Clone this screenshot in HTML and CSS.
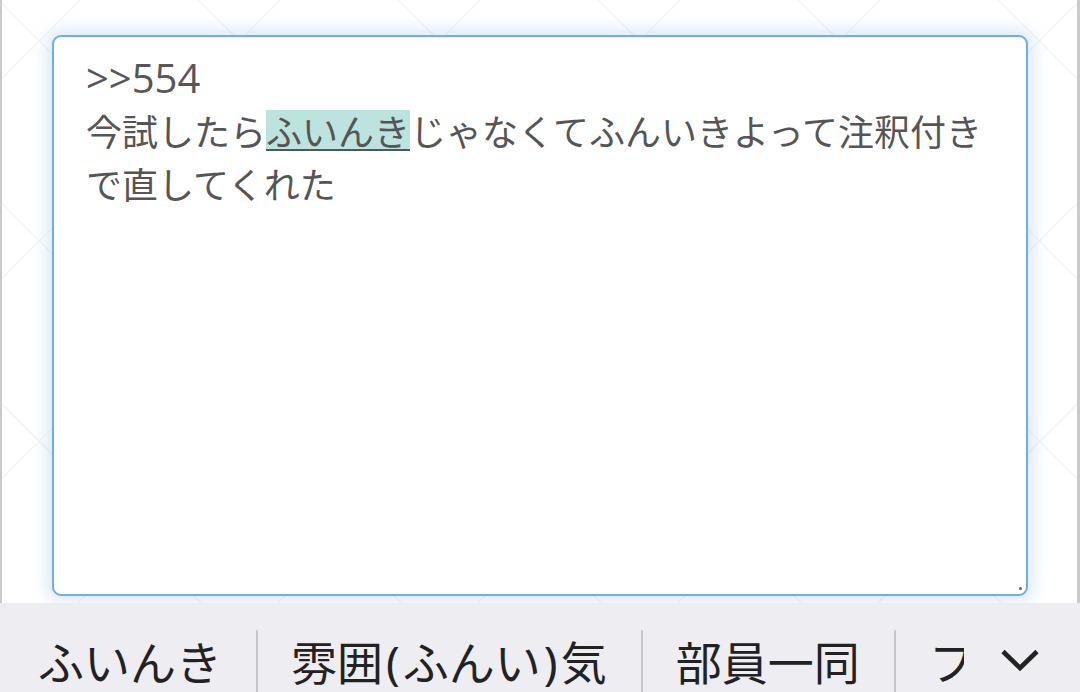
FILE: index.html
```html
<!DOCTYPE html>
<html lang="ja">
<head>
<meta charset="utf-8">
<link rel="stylesheet" href="styles.css">
</head>
<body>
<div class="page">
  <div class="content">
    <div class="editor">
      <div class="line"><span class="latin">&gt;&gt;554</span></div>
      <div class="line">今試したら<span class="compose">ふいんき</span>じゃなくてふんいきよって注釈付き</div>
      <div class="line">で直してくれた</div>
      <span class="grip"></span>
    </div>
  </div>
  <div class="bar">
    <div class="cand">ふいんき</div>
    <span class="sep"></span>
    <div class="cand">雰囲<span class="paren">(</span>ふんい<span class="paren">)</span>気</div>
    <span class="sep"></span>
    <div class="cand">部員一同</div>
    <span class="sep"></span>
    <div class="cand">フ</div>
    <div class="more">
      <svg width="40" height="24" viewBox="0 0 40 24"><path d="M3 3.5 L20 20 L37 3.5" fill="none" stroke="#222" stroke-width="4.6" stroke-linecap="butt" stroke-linejoin="miter"/></svg>
    </div>
  </div>
</div>
</body>
</html>
```

FILE: styles.css
```css
html, body {
  margin: 0;
  padding: 0;
}
body {
  width: 1080px;
  height: 692px;
  overflow: hidden;
  font-family: "Noto Sans CJK JP", "Noto Sans", sans-serif;
  background: #ffffff;
}
.page {
  display: flex;
  flex-direction: column;
  height: 692px;
}
.content {
  flex: 1;
  min-height: 0;
  border-left: 2px solid #cacaca;
  border-right: 3px solid #cacaca;
  padding: 35px 49px 7px 50px;
  background-color: #ffffff;
  background-image:
    repeating-linear-gradient(45deg, transparent 0 140px, #f6f6f6 140px 141.5px),
    repeating-linear-gradient(-45deg, transparent 0 140px, #f6f6f6 140px 141.5px);
}
.editor {
  position: relative;
  box-sizing: border-box;
  height: 100%;
  background: #ffffff;
  border: 2px solid #70aee6;
  border-radius: 9px;
  box-shadow: 0 0 16px 6px rgba(120, 175, 230, 0.26);
  padding: 14px 30px 14px 32px;
  color: #555555;
  font-size: 36px;
  line-height: 53px;
}
.latin {
  font-family: "Open Sans", "Noto Sans", sans-serif;
  font-size: 40px;
  line-height: 1;
  color: #575757;
}
.compose {
  background-image:
    linear-gradient(to bottom, transparent 6px, #bde3df 6px, #bde3df 45px, #4e5a5a 45px, #4e5a5a 47px, transparent 47px);
}
.grip {
  position: absolute;
  right: 4px;
  bottom: 4px;
  width: 3px;
  height: 3px;
  background: #666;
  border-radius: 50%;
}
.bar {
  position: relative;
  height: 89px;
  flex: none;
  background: #eeedf2;
  display: flex;
  align-items: stretch;
  padding-left: 4px;
  overflow: hidden;
  color: #222222;
  font-size: 46px;
}
.cand {
  padding: 27px 34px 0 33px;
  white-space: nowrap;
  line-height: 60px;
}
.cand:first-child {
  padding-left: 34px;
}
.paren {
  font-family: "Noto Sans", sans-serif;
  padding: 0 3px;
}
.sep {
  width: 2px;
  margin-top: 27px;
  background: #c6c6cc;
  flex: none;
}
.more {
  position: absolute;
  right: 0;
  top: 0;
  bottom: 0;
  width: 116px;
  display: flex;
  align-items: center;
  justify-content: center;
  padding-top: 24px;
  padding-right: 4px;
  box-sizing: border-box;
  background: #eeedf2;
}
```
